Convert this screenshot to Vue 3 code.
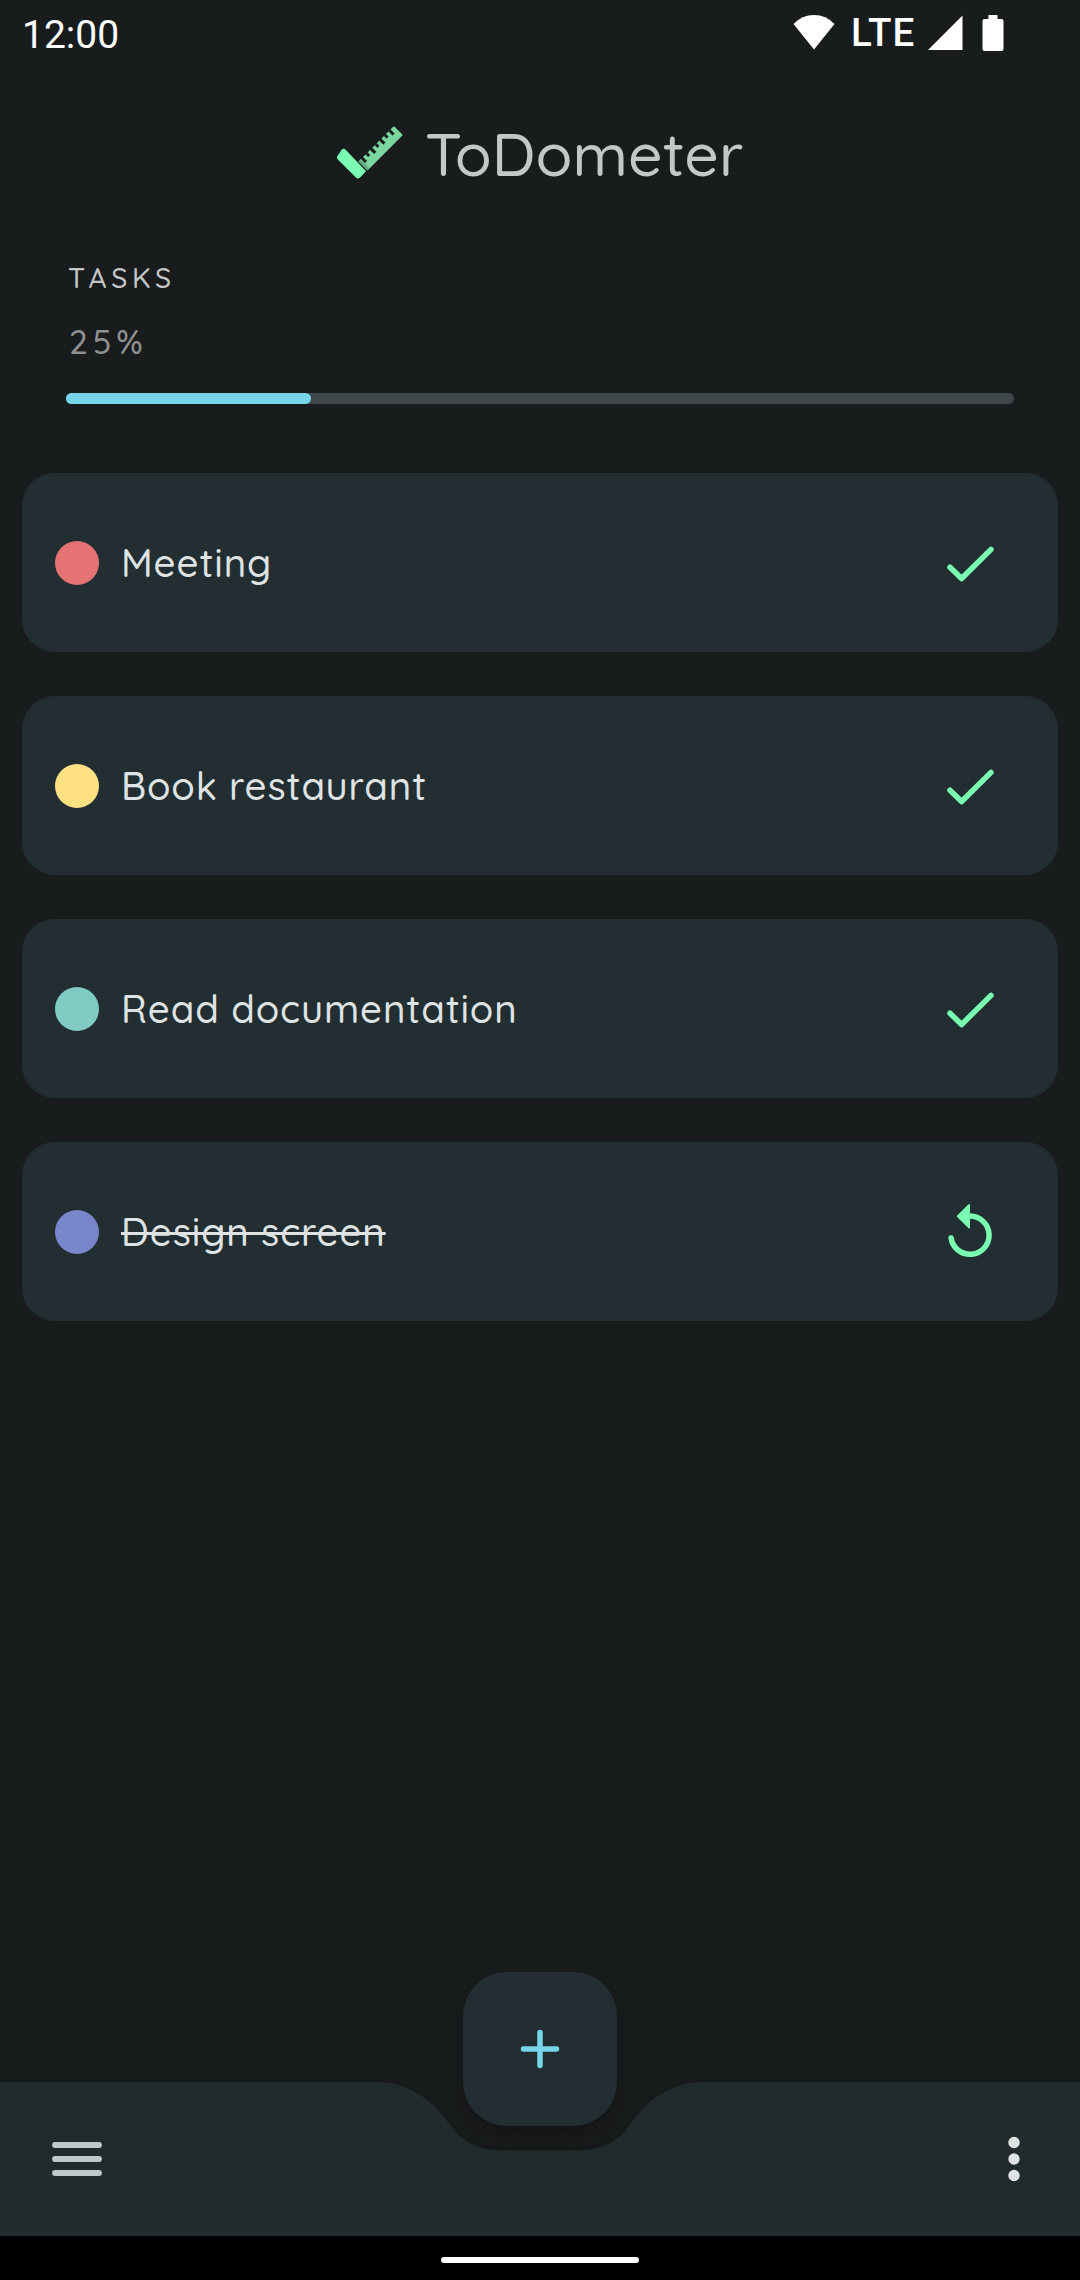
<script setup>
const progress = 25.85
const notches = Array.from({ length: 7 }, (_, i) => ({
  x: 11 + i * 19.5,
  depth: i % 2 ? 11 : 17,
}))
const tasks = [
  { title: 'Meeting', color: '#e57373', done: false },
  { title: 'Book restaurant', color: '#ffe082', done: false },
  { title: 'Read documentation', color: '#80cbc4', done: false },
  { title: 'Design screen', color: '#7986cb', done: true },
]
</script>

<template>
  <div class="screen">
    <header class="status">
      <span class="time">12:00</span>
      <div class="status-icons">
        <svg class="wifi" width="42" height="36" viewBox="0 0 42 36"><path d="M.5 10Q9 1 21 1t20.500 9L21 35.500z" fill="#fff" /></svg>
        <span class="lte">LTE</span>
        <svg class="signal" width="35" height="35" viewBox="0 0 35 35"><path d="M0 35 34.500 .5V35z" fill="#fff" /></svg>
        <svg class="battery" width="22" height="36" viewBox="0 0 22 36"><path d="M6.500 0h9v4H19.500a2 2 0 0 1 2 2v28a2 2 0 0 1-2 2H2.500a2 2 0 0 1-2-2V6a2 2 0 0 1 2-2H6.500z" fill="#fff" /></svg>
      </div>
    </header>

    <div class="brand">
      <svg class="logo" width="68" height="54" viewBox="48 50 204 162">
        <defs>
          <linearGradient id="fold" x1="0" y1="0" x2="1" y2="0">
            <stop offset="0" stop-color="#4f8f69" /><stop offset="1" stop-color="#7bd79d" />
          </linearGradient>
        </defs>
        <g transform="translate(115 157) rotate(-45)">
          <rect x="0" y="0" width="151" height="38" rx="3" fill="#7bd79d" />
          <rect x="0" y="0" width="14" height="38" fill="url(#fold)" />
          <rect v-for="n in notches" :key="n.x" :x="n.x" y="-1" width="9" :height="n.depth + 1" fill="#191c1d" />
        </g>
        <path d="M65 121q6-6 12 0l61 65-17 18q-7 7-14 0l-53-53q-6-7 0-13z" fill="#7affb2" />
      </svg>
      <h1>ToDometer</h1>
    </div>

    <section class="summary">
      <div class="label">TASKS</div>
      <div class="percent">25%</div>
      <div class="track"><div class="fill" :style="{ width: progress + '%' }"></div></div>
    </section>

    <main class="list">
      <article v-for="task in tasks" :key="task.title" class="card">
        <span class="dot" :style="{ background: task.color }"></span>
        <span class="title" :class="{ done: task.done }">{{ task.title }}</span>
        <svg v-if="!task.done" class="action" width="66" height="66" viewBox="0 0 66 66">
          <path d="M13 37.200 24.600 48.500 54 19.400" fill="none" stroke="#7affb2" stroke-width="5.500" stroke-linecap="round" stroke-linejoin="round" />
        </svg>
        <svg v-else class="action" width="66" height="66" viewBox="0 0 66 66">
          <path d="M33 17.100a19.100 19.100 0 1 1-18.900 21.900" fill="none" stroke="#7affb2" stroke-width="5.500" stroke-linecap="round" />
          <path d="M31.300 5.500Q33 4.200 33 6.200V28.200Q33 30.200 31.300 28.900L20.200 18Q19.400 17.200 20.200 16.400z" fill="#7affb2" />
        </svg>
      </article>
    </main>

    <footer class="bottom">
      <svg class="bar-shape" width="1080" height="174" viewBox="0 -20 1080 174">
        <path d="M0 0H378C408 0 434 18 450 43C462 59 478 68 497 68H583C602 68 618 59 630 43C646 18 672 0 702 0H1080V154H0z" fill="#212b2d" />
      </svg>
      <svg class="menu" width="50" height="34" viewBox="0 0 50 34">
        <path d="M3 3H47M3 17H47M3 31H47" stroke="#bfc8ca" stroke-width="5.800" stroke-linecap="round" />
      </svg>
      <svg class="more" width="12" height="46" viewBox="0 0 12 46" fill="#dfe3e4">
        <circle cx="6" cy="6.500" r="5.700" /><circle cx="6" cy="23" r="5.700" /><circle cx="6" cy="39.500" r="5.700" />
      </svg>
      <div class="fab">
        <svg width="40" height="40" viewBox="0 0 40 40"><path d="M20 3.500v33M3.500 20h33" stroke="#76d5e9" stroke-width="5.500" stroke-linecap="round" /></svg>
      </div>
    </footer>
    <div class="system-nav"><div class="handle"></div></div>
  </div>
</template>

<style>
body { margin: 0; background: #191c1d; }
</style>

<style scoped>
.screen {
  width: 1080px;
  height: 2280px;
  display: flex;
  flex-direction: column;
  background: #191c1d;
  font-family: Quicksand, Lato, sans-serif;
  font-weight: 500;
  overflow: hidden;
}
.status {
  height: 69px;
  flex: none;
  box-sizing: border-box;
  padding: 0 76px 0 22px;
  display: flex;
  justify-content: space-between;
  color: #fff;
  font-family: Roboto, sans-serif;
  font-weight: 400;
  font-size: 39px;
  line-height: 70px;
}
.status-icons { display: flex; align-items: flex-start; }
.wifi { margin: 14px 16px 0 0; }
.lte { width: 77px; font-size: 38.500px; font-weight: 500; line-height: 65px; white-space: nowrap; letter-spacing: 1px; }
.signal { margin-top: 15px; margin-right: 19px; }
.battery { margin-top: 15px; }
.brand {
  height: 168px;
  flex: none;
  display: flex;
  align-items: center;
  padding-left: 336px;
}
.logo { margin-right: 21px; }
h1 {
  margin: 0;
  color: #c4c7c7;
  font-size: 60.500px;
  line-height: 72px;
  font-weight: 500;
}
.summary { flex: none; height: 236px; padding: 0 66px; }
.label { margin: 21px 0 0 2px; line-height: 40px; font-size: 28px; letter-spacing: 4.700px; color: #c4c7c7; }
.percent { margin: 19px 0 0 3px; line-height: 48px; font-size: 33.500px; letter-spacing: 5px; color: #8e9191; }
.track { margin-top: 28px; height: 11px; border-radius: 5.500px; background: #40484b; }
.fill { height: 100%; border-radius: 5.500px; background: #76d5e9; }
.list { flex: 1; padding: 0 22px; display: flex; flex-direction: column; gap: 44px; }
.card {
  height: 179px;
  flex: none;
  box-sizing: border-box;
  padding: 1px 55px 0 33px;
  display: flex;
  align-items: center;
  background: #222e32;
  border-radius: 33px;
}
.dot { width: 44px; height: 44px; border-radius: 50%; margin-right: 22px; }
.title { font-size: 38.500px; line-height: 50px; color: #dfe3e4; letter-spacing: .86px; }
.done { text-decoration: line-through; text-decoration-thickness: 2.500px; }
.action { margin-left: auto; }
.bottom {
  position: relative;
  flex: none;
  height: 154px;
  box-sizing: border-box;
  padding: 0 60px 0 52px;
  display: flex;
  align-items: center;
  justify-content: space-between;
}
.bar-shape { position: absolute; left: 0; top: -20px; filter: drop-shadow(0 0 3px rgba(0, 0, 0, .25)); }
.menu, .more { position: relative; }
.fab {
  position: absolute;
  left: 463px;
  top: -110px;
  width: 154px;
  height: 154px;
  border-radius: 44px;
  background: #222e32;
  display: flex;
  align-items: center;
  justify-content: center;
  box-shadow: 0 10px 18px rgba(15, 12, 16, .45);
}
.system-nav { position: relative; flex: none; height: 44px; background: #000; display: flex; align-items: center; justify-content: center; }
.handle { width: 198px; height: 6px; border-radius: 3px; background: #fff; margin-top: 3px; }
</style>
